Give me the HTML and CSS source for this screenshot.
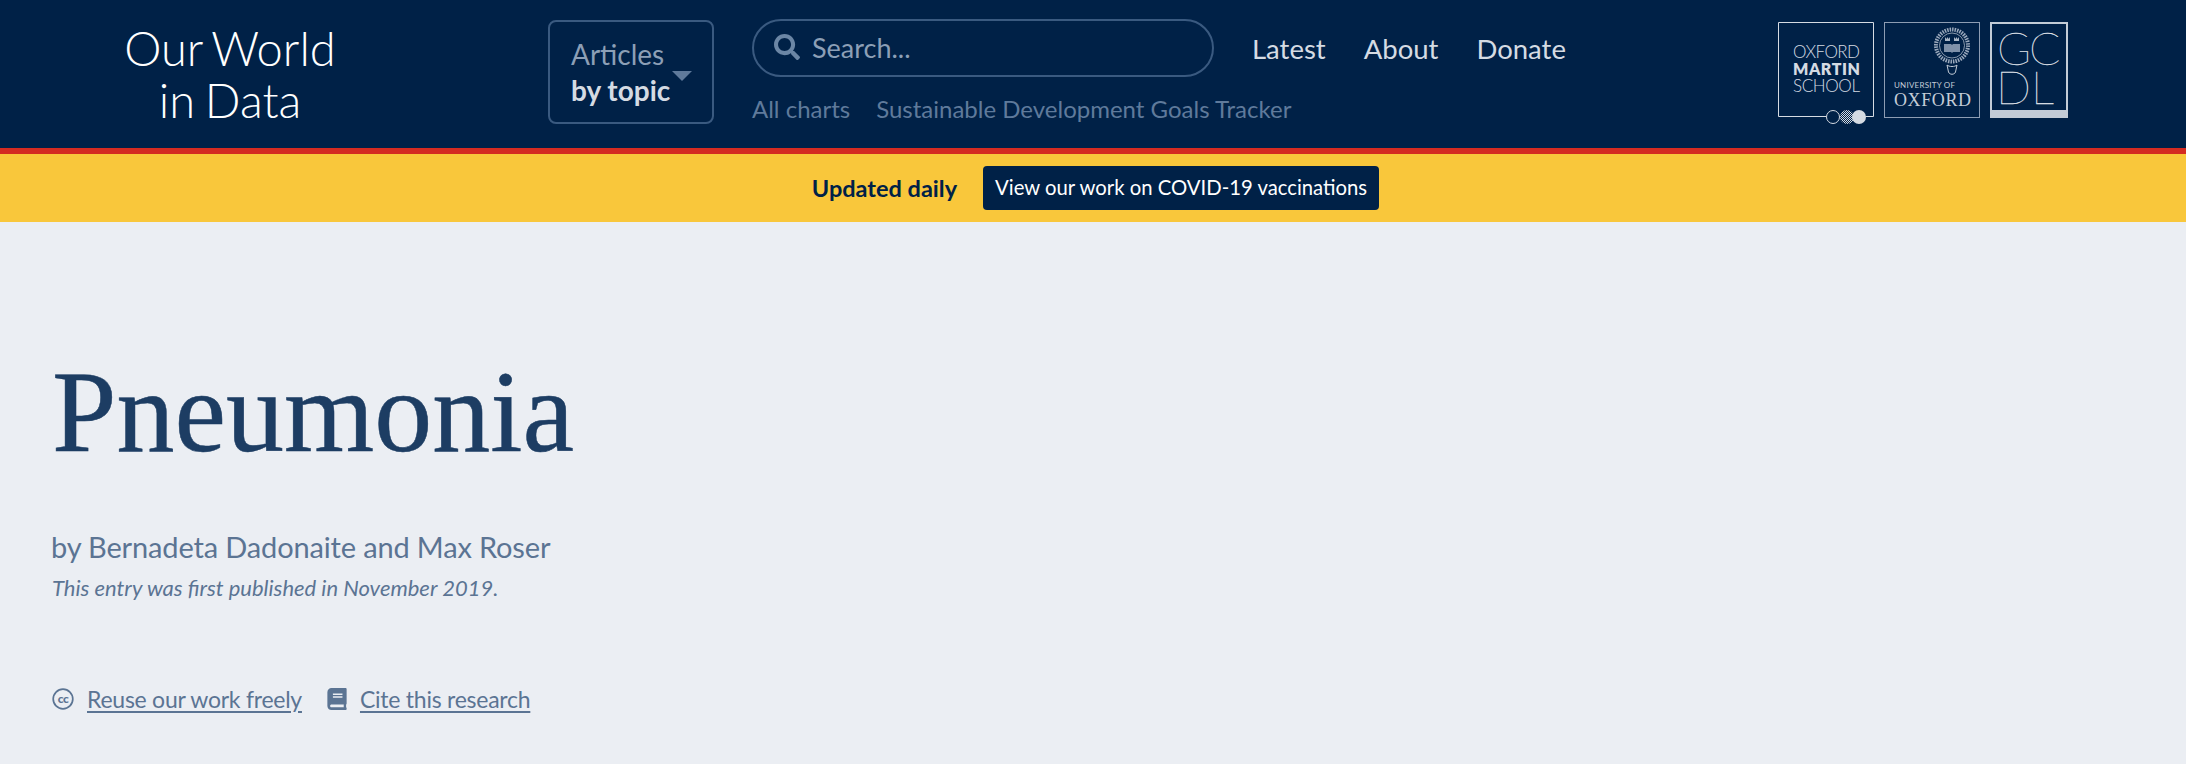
FILE: index.html
```html
<!DOCTYPE html>
<html lang="en">
<head>
  <meta charset="UTF-8">
  <title>Pneumonia - Our World in Data</title>
  <link rel="stylesheet" href="styles.css">
</head>
<body>
  <header class="site-header">
    <a class="site-logo">Our World<br>in Data</a>

    <button class="topics-btn">
      <span class="topics-label">Articles<br><strong>by topic</strong></span>
      <span class="topics-caret"></span>
    </button>

    <div class="site-nav">
      <div class="nav-top">
        <div class="search-box">
          <svg class="search-icon" viewBox="0 0 512 512"><path d="M505 442.700L405.300 343c-4.500-4.500-10.600-7-17-7H372c27.600-35.300 44-79.700 44-128C416 93.100 322.900 0 208 0S0 93.100 0 208s93.100 208 208 208c48.300 0 92.700-16.400 128-44v16.300c0 6.400 2.500 12.500 7 17l99.700 99.700c9.400 9.400 24.600 9.400 33.900 0l28.300-28.300c9.400-9.400 9.400-24.600.1-34zM208 336c-70.700 0-128-57.200-128-128 0-70.700 57.200-128 128-128 70.700 0 128 57.200 128 128 0 70.700-57.200 128-128 128z"/></svg>
          <span>Search...</span>
        </div>
        <a class="nav-link">Latest</a>
        <a class="nav-link">About</a>
        <a class="nav-link">Donate</a>
      </div>
      <div class="nav-sub">
        <a>All charts</a>
        <a>Sustainable Development Goals Tracker</a>
      </div>
    </div>

    <div class="partner-logos">
      <svg class="logo-oms" viewBox="0 0 96 104">
        <defs>
          <pattern id="dots" width="2" height="2" patternUnits="userSpaceOnUse">
            <rect width="1" height="1" fill="#d5dbe3"/>
            <rect x="1" y="1" width="1" height="1" fill="#d5dbe3"/>
          </pattern>
        </defs>
        <path d="M48 94.500H.5V.5h95v94h-8" fill="none" stroke="#d5dbe3" stroke-width="1"/>
        <text class="oms-text" x="15" y="36" textLength="67">OXFORD</text>
        <text class="oms-text oms-bold" x="15" y="53" textLength="67">MARTIN</text>
        <text class="oms-text" x="15" y="70" textLength="67">SCHOOL</text>
        <circle cx="55" cy="95" r="6.500" fill="#002147" stroke="#d5dbe3"/>
        <circle cx="69" cy="95" r="7" fill="url(#dots)"/>
        <circle cx="81" cy="95" r="7" fill="#d5dbe3"/>
      </svg>

      <svg class="logo-oxford" viewBox="0 0 96 96">
        <rect x=".5" y=".5" width="95" height="95" fill="none" stroke="#8d9db3"/>
        <circle cx="68" cy="23.500" r="16" fill="none" stroke="#9aa9bc" stroke-width="4" stroke-dasharray="1.500 1"/>
        <circle cx="68" cy="23.500" r="12.500" fill="none" stroke="#c3ccd7" stroke-width=".7"/>
        <path d="M61 15l1.500 2 1-2 1 2 1.500-2v4h-5zM70 15l1.500 2 1-2 1 2 1.500-2v4h-5z" fill="#a9b6c6"/>
        <path d="M60 22h7l1 1 1-1h7v8h-7l-1 1-1-1h-7z" fill="#7f91a9"/>
        <path d="M63 43c2 2 8 2 10 0l-1.500 7c-1 3-6 3-7 0z" fill="none" stroke="#c3ccd7"/>
        <text class="ox-small" x="10" y="66" textLength="61">UNIVERSITY OF</text>
        <text class="ox-big" x="10" y="84" textLength="77">OXFORD</text>
      </svg>

      <svg class="logo-gcdl" viewBox="0 0 78 96">
        <rect x="1" y="1" width="76" height="94" fill="none" stroke="#c3ccd7" stroke-width="2"/>
        <rect x="1" y="88" width="76" height="7" fill="#c3ccd7"/>
        <text class="gcdl-text" x="7" y="43">G</text>
        <text class="gcdl-text" x="39" y="43">C</text>
        <text class="gcdl-text" x="6" y="82">D</text>
        <text class="gcdl-text" x="41" y="82">L</text>
      </svg>
    </div>
  </header>

  <div class="alert-bar">
    <strong>Updated daily</strong>
    <a class="alert-btn">View our work on COVID-19 vaccinations</a>
  </div>

  <main class="article-head">
    <h1>Pneumonia</h1>
    <div class="authors">by Bernadeta Dadonaite and Max Roser</div>
    <div class="pub-date">This entry was first published in November 2019.</div>
    <div class="tools">
      <svg class="tool-icon" viewBox="0 0 22 22">
        <circle cx="11" cy="11" r="9.800" fill="none" stroke="#5b7493" stroke-width="1.700"/>
        <text class="cc-text" x="11" y="14.500">cc</text>
      </svg>
      <a class="tool-link">Reuse our work freely</a>
      <svg class="tool-icon book-icon" viewBox="0 0 448 512"><path d="M448 360V24c0-13.300-10.700-24-24-24H96C43 0 0 43 0 96v320c0 53 43 96 96 96h328c13.300 0 24-10.700 24-24v-16c0-7.500-3.500-14.300-8.900-18.700-4.200-15.400-4.200-59.300 0-74.700 5.400-4.300 8.900-11.100 8.900-18.600zM128 134c0-3.300 2.700-6 6-6h212c3.300 0 6 2.700 6 6v20c0 3.300-2.700 6-6 6H134c-3.300 0-6-2.700-6-6v-20zm0 64c0-3.300 2.700-6 6-6h212c3.300 0 6 2.700 6 6v20c0 3.300-2.700 6-6 6H134c-3.300 0-6-2.700-6-6v-20zm253.400 250H96c-17.700 0-32-14.300-32-32 0-17.600 14.400-32 32-32h285.400c-1.900 17.100-1.900 46.900 0 64z"/></svg>
      <a class="tool-link">Cite this research</a>
    </div>
  </main>
</body>
</html>
```

FILE: styles.css
```css
* {
  box-sizing: border-box;
}

body {
  margin: 0;
  font-family: Lato, "Open Sans", sans-serif;
  background-color: #ebeef3;
  color: #5b7493;
}

/* top bar */
.site-header {
  height: 154px;
  padding: 0 118px 4px 124px;
  display: flex;
  align-items: center;
  background-color: #002147;
  border-bottom: 6px solid #d42b21;
}

.site-logo {
  width: 212px;
  padding-top: 4px;
  font-size: 47px;
  font-weight: 300;
  line-height: 52px;
  word-spacing: -3px;
  text-align: center;
  color: #fff;
}

.topics-btn {
  width: 166px;
  height: 104px;
  margin-left: 212px;
  padding: 0 20px 0 21px;
  display: flex;
  align-items: center;
  justify-content: space-between;
  background: none;
  border: 2px solid #3a5a80;
  border-radius: 8px;
  font-family: inherit;
  text-align: left;
}

.topics-label {
  font-size: 28px;
  line-height: 36px;
  color: #8c9fb6;
}

.topics-label strong {
  color: #d5dbe3;
}

.topics-caret {
  margin-top: 8px;
  border-left: 10px solid transparent;
  border-right: 10px solid transparent;
  border-top: 10px solid #5f7a9b;
}

.site-nav {
  margin-left: 38px;
}

.nav-top {
  display: flex;
  align-items: center;
}

.search-box {
  width: 462px;
  height: 58px;
  margin-right: 38px;
  padding-left: 20px;
  padding-bottom: 2px;
  display: flex;
  align-items: center;
  gap: 12px;
  border: 2px solid #3a5a80;
  border-radius: 29px;
  font-size: 27px;
  color: #8c9fb6;
}

.search-icon {
  width: 26px;
  height: 26px;
  fill: #6b86a5;
}

.nav-link {
  margin-right: 38px;
  font-size: 27.500px;
  color: #d5dbe3;
}

.nav-sub {
  margin-top: 17px;
  margin-bottom: 2px;
  display: flex;
  gap: 26px;
  font-size: 24px;
  color: #5f7a9b;
}

.partner-logos {
  margin-left: auto;
  margin-top: 4px;
  display: flex;
  align-items: flex-start;
  gap: 10px;
}

.partner-logos svg {
  overflow: visible;
}

.logo-oms {
  width: 96px;
  height: 104px;
}

.logo-oxford {
  width: 96px;
  height: 96px;
}

.logo-gcdl {
  width: 78px;
  height: 96px;
}

.oms-text {
  font-family: Lato, sans-serif;
  font-size: 17px;
  font-weight: 300;
  fill: #d5dbe3;
}

.oms-bold {
  font-size: 16px;
  font-weight: 800;
}

.ox-small {
  font-family: Lato, sans-serif;
  font-size: 8px;
  fill: #c3ccd7;
}

.ox-big {
  font-family: "Liberation Serif", serif;
  font-size: 18px;
  fill: #c3ccd7;
}

.gcdl-text {
  font-family: Lato, sans-serif;
  font-size: 46px;
  font-weight: 100;
  fill: #e4e8ee;
  stroke: #e4e8ee;
  stroke-width: 0.3px;
}

/* yellow banner */
.alert-bar {
  height: 68px;
  padding-left: 5px;
  display: flex;
  align-items: center;
  justify-content: center;
  gap: 26px;
  background-color: #f9c73b;
  font-size: 23.500px;
  color: #002147;
}

.alert-btn {
  height: 44px;
  padding: 0 12px 2px;
  display: flex;
  align-items: center;
  background-color: #002147;
  border-radius: 4px;
  font-size: 20.300px;
  color: #fff;
}

/* article heading */
.article-head {
  padding: 128px 52px 0;
}

h1 {
  margin: 0;
  font-family: "Liberation Serif", serif;
  font-size: 116px;
  font-weight: 400;
  line-height: 124px;
  color: #1d3d63;
  -webkit-text-stroke: 0.5px #1d3d63;
}

.authors {
  margin-top: 55px;
  margin-left: -1px;
  font-size: 29px;
  line-height: 36px;
  letter-spacing: -0.15px;
}

.pub-date {
  margin-top: 9px;
  font-size: 22px;
  font-style: italic;
  line-height: 28px;
}

.tools {
  margin-top: 83px;
  display: flex;
  align-items: center;
  font-size: 23px;
  letter-spacing: -0.25px;
}

.tool-icon {
  width: 22px;
  height: 22px;
  margin-right: 13px;
}

.cc-text {
  font-family: Lato, sans-serif;
  font-size: 12px;
  font-weight: 900;
  letter-spacing: -0.5px;
  text-anchor: middle;
  fill: #5b7493;
}

.book-icon {
  width: 20px;
  margin-left: 25px;
  fill: #5b7493;
}

.tool-link {
  text-decoration: underline;
  text-decoration-thickness: 2px;
  text-underline-offset: 3px;
}
```
